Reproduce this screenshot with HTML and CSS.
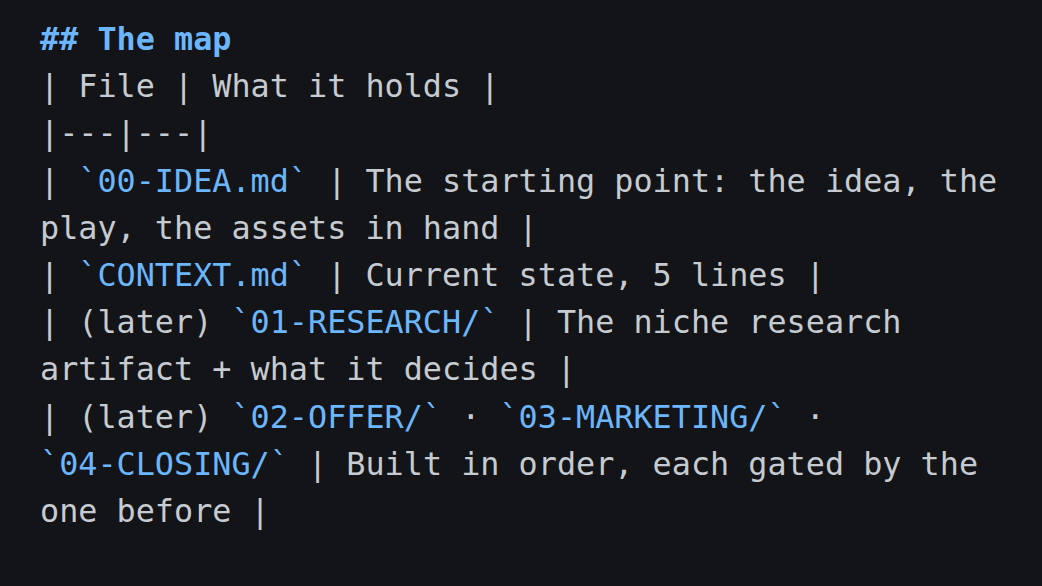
FILE: index.html
```html
<!DOCTYPE html>
<html>
<head>
<meta charset="utf-8">
<link rel="stylesheet" href="styles.css">
</head>
<body>
<main class="doc">
  <div class="line heading">## The map</div>
  <div class="line">| File | What it holds |</div>
  <div class="line">|---|---|</div>
  <div class="line">| <span class="code">`00-IDEA.md`</span> | The starting point: the idea, the play, the assets in hand |</div>
  <div class="line">| <span class="code">`CONTEXT.md`</span> | Current state, 5 lines |</div>
  <div class="line">| (later) <span class="code">`01-RESEARCH/`</span> | The niche research artifact + what it decides |</div>
  <div class="line">| (later) <span class="code">`02-OFFER/`</span> · <span class="code">`03-MARKETING/`</span> · <span class="code">`04-CLOSING/`</span> | Built in order, each gated by the one before |</div>
</main>
</body>
</html>
```

FILE: styles.css
```css
html, body {
  margin: 0;
  padding: 0;
  background: #131417;
  height: 100%;
}
body {
  font-family: "DejaVu Sans Mono", "Liberation Mono", monospace;
  font-size: 31.8px;
  line-height: 47.2px;
  color: #c6cbd1;
}
.doc {
  padding: 15px 40px 0 40px;
  max-width: 51ch;
}
.line {
  white-space: normal;
}
.heading {
  color: #6cb6ff;
  font-weight: bold;
}
.code {
  color: #6cb6ff;
  white-space: nowrap;
}
```
